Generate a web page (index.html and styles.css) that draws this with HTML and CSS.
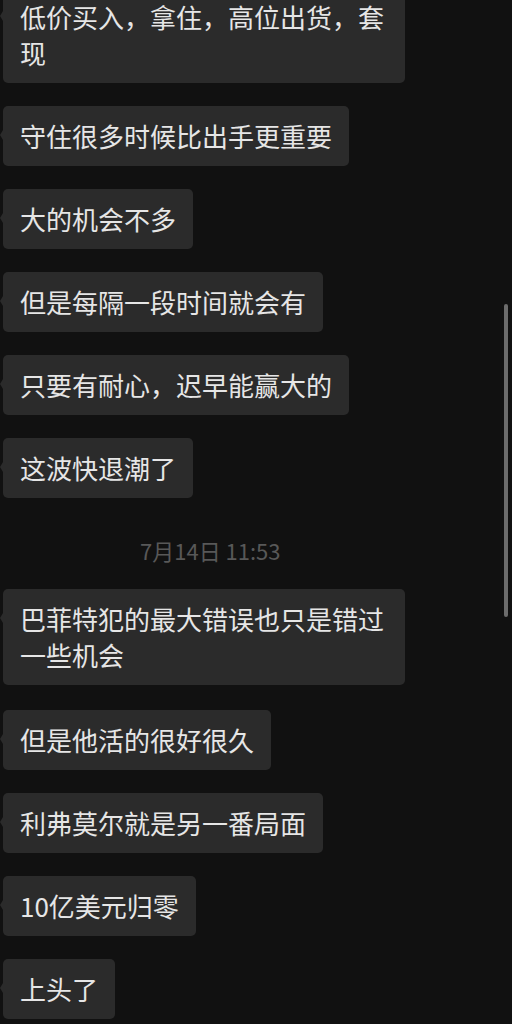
FILE: index.html
```html
<!DOCTYPE html>
<html lang="zh-CN">
<head>
<meta charset="utf-8">
<title>聊天记录</title>
<link rel="stylesheet" href="styles.css">
</head>
<body>
<div class="chat">
  <div class="thread">
    <div class="msg">低价买入，拿住，高位出货，套现</div>
    <div class="msg">守住很多时候比出手更重要</div>
    <div class="msg">大的机会不多</div>
    <div class="msg">但是每隔一段时间就会有</div>
    <div class="msg">只要有耐心，迟早能赢大的</div>
    <div class="msg">这波快退潮了</div>
    <div class="time">7月14日 11:53</div>
    <div class="msg">巴菲特犯的最大错误也只是错过一些机会</div>
    <div class="msg after-long">但是他活的很好很久</div>
    <div class="msg">利弗莫尔就是另一番局面</div>
    <div class="msg">10亿美元归零</div>
    <div class="msg">上头了</div>
  </div>
  <div class="scrollbar"></div>
</div>
</body>
</html>
```

FILE: styles.css
```css
html, body {
  margin: 0;
  padding: 0;
  background: #111111;
}

.chat {
  position: relative;
  width: 512px;
  height: 1024px;
  overflow: hidden;
  font-family: "Noto Sans CJK SC", "Noto Sans", sans-serif;
}

.thread {
  display: flex;
  flex-direction: column;
  align-items: flex-start;
  gap: 23px;
  margin-top: -13px;
  padding-left: 3px;
}

.msg {
  position: relative;
  box-sizing: border-box;
  max-width: 402px;
  padding: 12px 17px;
  background: #2b2b2b;
  border-radius: 5px;
  color: #e6e6e6;
  font-size: 26px;
  line-height: 36px;
  word-break: break-all;
}

/* small tail on the left side of each bubble */
.msg::before {
  content: "";
  position: absolute;
  left: -3px;
  top: 24px;
  border-top: 5px solid transparent;
  border-bottom: 5px solid transparent;
  border-right: 3px solid #2b2b2b;
}

.after-long {
  margin-top: 2px;
}

.time {
  align-self: stretch;
  margin: 15px 0 2px;
  padding-left: 137px;
  color: #585858;
  font-size: 22px;
  line-height: 28px;
}

.scrollbar {
  position: absolute;
  left: 504px;
  top: 304px;
  width: 4px;
  height: 313px;
  border-radius: 2px;
  background: #6c6c6c;
}
```
